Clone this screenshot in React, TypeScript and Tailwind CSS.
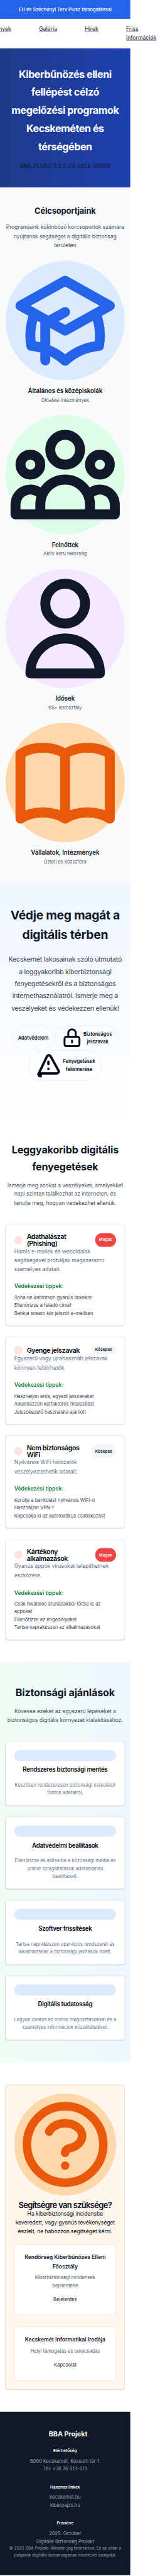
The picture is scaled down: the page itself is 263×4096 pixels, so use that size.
import type { ReactNode } from "react";

type IconProps = { d: string; className: string };

const Icon = ({ d, className }: IconProps) => (
  <svg viewBox="0 0 24 24" fill="none" stroke="currentColor" strokeWidth={2} strokeLinecap="round" strokeLinejoin="round" className={className}>
    <path d={d} />
  </svg>
);

const paths = {
  cap: "M12 14l9-5-9-5-9 5 9 5zm0 0l6.16-3.422a12.083 12.083 0 01.665 6.479A11.952 11.952 0 0012 20.055a11.952 11.952 0 00-6.824-2.998 12.078 12.078 0 01.665-6.479L12 14zm-4 6v-7.5l4-2.222",
  group: "M17 20h5v-2a3 3 0 00-5.356-1.857M17 20H7m10 0v-2c0-.656-.126-1.283-.356-1.857M7 20H2v-2a3 3 0 015.356-1.857M7 20v-2c0-.656.126-1.283.356-1.857m0 0a5.002 5.002 0 019.288 0M15 7a3 3 0 11-6 0 3 3 0 016 0zm6 3a2 2 0 11-4 0 2 2 0 014 0zM7 10a2 2 0 11-4 0 2 2 0 014 0z",
  user: "M16 7a4 4 0 11-8 0 4 4 0 018 0zM12 14a7 7 0 00-7 7h14a7 7 0 00-7-7z",
  book: "M12 6.253v13m0-13C10.832 5.477 9.246 5 7.5 5S4.168 5.477 3 6.253v13C4.168 18.477 5.754 18 7.5 18s3.332.477 4.5 1.253m0-13C13.168 5.477 14.754 5 16.5 5c1.747 0 3.332.477 4.5 1.253v13C19.832 18.477 18.247 18 16.5 18c-1.746 0-3.332.477-4.5 1.253",
  lock: "M12 15v2m-6 4h12a2 2 0 002-2v-6a2 2 0 00-2-2H6a2 2 0 00-2 2v6a2 2 0 002 2zm10-10V7a4 4 0 00-8 0v4h8z",
  warning: "M12 9v2m0 4h.01m-6.938 4h13.856c1.54 0 2.502-1.667 1.732-2.5L13.732 4c-.77-.833-1.964-.833-2.732 0L3.732 19c-.77.833.192 2.5 1.732 2.5z",
  question: "M8.228 9c.549-1.165 2.03-2 3.772-2 2.21 0 4 1.343 4 3 0 1.4-1.278 2.575-3.006 2.907-.542.104-.994.54-.994 1.093m0 3h.01M21 12a9 9 0 11-18 0 9 9 0 0118 0z",
};

const audiences = [
  { title: "Általános és középiskolák", text: "Oktatási intézmények", d: paths.cap, circle: "bg-[#dbeafe]", ink: "text-[#2563eb]" },
  { title: "Felnőttek", text: "Aktív korú lakosság", d: paths.group, circle: "bg-[#dcfce7]", ink: "text-[#111827]" },
  { title: "Idősek", text: "65+ korosztály", d: paths.user, circle: "bg-[#f3e8ff]", ink: "text-[#111827]" },
  { title: "Vállalatok, Intézmények", text: "Üzleti és közszféra", d: paths.book, circle: "bg-[#fed7aa]", ink: "text-[#ea580c]" },
];

const threats = [
  {
    title: "Adathalászat\n(Phishing)",
    high: true,
    text: "Hamis e-mailek és weboldalak\nsegítségével próbálják megszerezni\nszemélyes adatait.",
    tips: ["Soha ne kattintson gyanús linkekre", "Ellenőrizze a feladó címét", "Bankja sosem kér jelszót e-mailben"],
  },
  {
    title: "Gyenge jelszavak",
    high: false,
    text: "Egyszerű vagy újrahasznált jelszavak\nkönnyen feltörhetők.",
    tips: ["Használjon erős, egyedi jelszavakat", "Alkalmazzon kétfaktoros hitelesítést", "Jelszókezelő használata ajánlott"],
  },
  {
    title: "Nem biztonságos\nWiFi",
    high: false,
    text: "Nyilvános WiFi hálózatok\nveszélyeztethetik adatait.",
    tips: ["Kerülje a bankolást nyilvános WiFi-n", "Használjon VPN-t", "Kapcsolja ki az automatikus csatlakozást"],
  },
  {
    title: "Kártékony\nalkalmazások",
    high: true,
    text: "Gyanús appok vírusokat telepíthetnek\neszközére.",
    tips: ["Csak hivatalos áruházakból töltse le az\nappokat", "Ellenőrizze az engedélyeket", "Tartsa naprakészen az alkalmazásokat"],
  },
];

const advice = [
  { title: "Rendszeres biztonsági mentés", text: "Készítsen rendszeresen biztonsági másolatot\nfontos adatairól." },
  { title: "Adatvédelmi beállítások", text: "Ellenőrizze és állítsa be a közösségi média és\nonline szolgáltatások adatvédelmi\nbeállításait." },
  { title: "Szoftver frissítések", text: "Tartsa naprakészen operációs rendszerét és\nalkalmazásait a biztonsági javítások miatt." },
  { title: "Digitális tudatosság", text: "Legyen óvatos az online megosztásokkal és a\nszemélyes információk közzétételével." },
];

const contacts = [
  { title: "Rendőrség Kiberbűnözés Elleni\nFőosztály", text: "Kiberbiztonsági incidensek\nbejelentése", action: "Bejelentés" },
  { title: "Kecskemét Informatikai Irodája", text: "Helyi támogatás és tanácsadás", action: "Kapcsolat" },
];

const footerBlocks = [
  { title: "Elérhetőség", lines: ["6000 Kecskemét, Kossuth tér 1.", "Tel: +36 76 513-513"] },
  { title: "Hasznos linkek", lines: ["kecskemet.hu", "kiberpajzs.hu"] },
  { title: "Frissítve", lines: ["2025. October", "Digitális Biztonság Projekt"] },
];

const body = "text-[15.5px] leading-[25.6px] tracking-[-0.12px]";
const small = "text-[13.6px] leading-[22.4px]";
const centered = "flex flex-col items-center";

const Pill = ({ children }: { children: ReactNode }) => (
  <div className="flex items-center justify-center rounded-full border border-[#e2e8f0] px-4 py-0.5 text-center text-[13.6px] font-semibold leading-[22.4px] tracking-[0.07px] text-[#020817]">
    {children}
  </div>
);

const SectionHead = ({ title, text }: { title: string; text: string }) => (
  <div className={`mb-12 text-center ${centered}`}>
    <h2 className="mb-4 text-[29.1px] font-bold leading-[48px] tracking-[-0.32px] text-[#111827]">{title}</h2>
    <p className={`${body} text-[#4b5563]`}>{text}</p>
  </div>
);

export default function App() {
  return (
    <div className="h-[4096px] w-[263px] overflow-hidden bg-white">
      <div className="w-[475px] origin-top-left scale-[0.55385] whitespace-pre font-['Inter',sans-serif] text-[15.5px] leading-[25.6px] text-[#111827]">
        <div className="flex w-[375px] justify-center bg-[#2563eb] py-4 text-[13.6px] font-medium leading-[22.4px] tracking-[-0.09px] text-white">
          EU és Széchenyi Terv Plusz támogatással
        </div>

        <nav className="flex w-[475px] justify-end gap-20 overflow-hidden pt-4 pr-6 pb-[17px] font-medium tracking-[-0.04px] text-[#374151] underline">
          <a className="shrink-0">Események</a>
          <a className="shrink-0">Galéria</a>
          <a className="shrink-0">Hírek</a>
          <a className="w-[88px] shrink-0">{"Friss\ninformációk"}</a>
        </nav>

        <div className="w-[375px]">
          <section className={`bg-linear-to-r from-[#1e3a8a] to-[#1e40af] py-12 text-center ${centered}`}>
            <h1 className="mb-4 text-[29.1px] font-bold leading-[52.3px] tracking-[-0.79px] text-white">
              {"Kiberbűnözés elleni\nfellépést célzó\nmegelőzési programok\nKecskeméten és\ntérségében"}
            </h1>
            <p className="tracking-[0.04px]">BBA_PLUSZ-3.3.2-24-2024-00009</p>
          </section>

          <section className="bg-[#f9fafb] px-4 py-12 text-center">
            <h2 className="mb-4 text-[23.3px] font-bold leading-[38.4px] tracking-[-0.26px]">Célcsoportjaink</h2>
            <p className={`${body} text-[#4b5563]`}>{"Programjaink különböző korcsoportok számára\nnyújtanak segítséget a digitális biztonság\nterületén"}</p>
            <div className="mt-8 flex flex-col gap-8">
              {audiences.map((a) => (
                <div key={a.title}>
                  <div className={`mb-4 rounded-full ${a.circle} ${a.ink}`}>
                    <Icon d={a.d} className="block size-[343px]" />
                  </div>
                  <h3 className="text-[17.5px] font-semibold leading-[28.8px] tracking-[-0.15px]">{a.title}</h3>
                  <p className={`${small} text-[#4b5563]`}>{a.text}</p>
                </div>
              ))}
            </div>
          </section>

          <section className={`bg-linear-to-b from-[#eff6ff] to-white pt-16 pb-28 text-center ${centered}`}>
            <h2 className="mb-6 text-[34.9px] font-bold leading-[57.6px] tracking-[-0.54px]">{"Védje meg magát a\ndigitális térben"}</h2>
            <p className="mb-8 text-[19.4px] leading-[35px] tracking-[-0.5px] text-[#374151]">
              {"Kecskemét lakosainak szóló útmutató\na leggyakoribb kiberbiztonsági\nfenyegetésekről és a biztonságos\ninternethasználatról. Ismerje meg a\nveszélyeket és védekezzen ellenük!"}
            </p>
            <div className="flex w-[343px] flex-wrap justify-center gap-px">
              <Pill>Adatvédelem</Pill>
              <Pill>
                <Icon d={paths.lock} className="size-[64.5px] shrink-0" />
                <span className="w-[84px]">{"Biztonságos\njelszavak"}</span>
              </Pill>
              <Pill>
                <Icon d={paths.warning} className="size-[80.5px] shrink-0" />
                <span className="w-[96px]">{"Fenyegetések\nfelismerése"}</span>
              </Pill>
            </div>
          </section>

          <section className="px-4 py-16">
            <SectionHead
              title={"Leggyakoribb digitális\nfenyegetések"}
              text={"Ismerje meg azokat a veszélyeket, amelyekkel\nnapi szinten találkozhat az interneten, és\ntanulja meg, hogyan védekezhet ellenük."}
            />
            <div className="flex flex-col gap-8">
              {threats.map((t) => (
                <article key={t.title} className="rounded-lg border border-[#e2e8f0] bg-white p-6 shadow-sm">
                  <div className="flex justify-between">
                    <div className="flex items-center gap-3">
                      <div className="size-6 shrink-0 rounded-full bg-[#fee2e2]" />
                      <h3 className="text-[19.4px] font-semibold leading-[20px] tracking-[-0.8px] text-[#020817]">{t.title}</h3>
                    </div>
                    <div
                      className={`flex shrink-0 items-center rounded-full border border-transparent px-2.5 py-0.5 text-[11.65px] font-semibold leading-[19.2px] tracking-[0.1px] ${
                        t.high ? "bg-[#ef4444] text-[#f8fafc]" : "bg-[#f1f5f9] text-[#0f172a]"
                      }`}
                    >
                      {t.high ? "Magas" : "Közepes"}
                    </div>
                  </div>
                  <p className={`mb-6 ${body} text-[#64748b]`}>{t.text}</p>
                  <h4 className="mb-2 font-semibold text-[#15803d]">Védekezési tippek:</h4>
                  <ul className={`${small} text-[#374151]`}>
                    {t.tips.map((tip) => (
                      <li key={tip}>{tip}</li>
                    ))}
                  </ul>
                </article>
              ))}
            </div>
          </section>

          <section className="bg-linear-to-r from-[#f0fdf4] to-[#eff6ff] px-4 py-16">
            <SectionHead title="Biztonsági ajánlások" text={"Kövesse ezeket az egyszerű lépéseket a\nbiztonságos digitális környezet kialakításához."} />
            <div className="flex flex-col gap-8">
              {advice.map((a) => (
                <article key={a.title} className="rounded-lg border border-[#e2e8f0] bg-white p-6 text-center shadow-sm">
                  <div className="mb-4 h-8 rounded-full bg-[#dbeafe]" />
                  <h3 className="mb-6 text-[17.5px] font-semibold leading-[18px] tracking-[-0.53px] text-[#020817]">{a.title}</h3>
                  <p className={`${small} ${centered} text-[#64748b]`}>{a.text}</p>
                </article>
              ))}
            </div>
          </section>

          <section className="px-4 py-16">
            <div className="rounded-lg border border-[#fed7aa] bg-[#fff7ed] p-6 text-center text-[#020817] shadow-sm">
              <div className="mb-4 rounded-full bg-[#fed7aa] text-[#ea580c]">
                <Icon d={paths.question} className="block size-[293px]" />
              </div>
              <h2 className="text-[23.3px] font-semibold leading-[24px] tracking-[-1.12px]">Segítségre van szüksége?</h2>
              <p className={`mb-6 ${body}`}>{"Ha kiberbiztonsági incidensbe\nkeveredett, vagy gyanús tevékenységet\nészlelt, ne habozzon segítséget kérni."}</p>
              <div className="flex flex-col gap-8">
                {contacts.map((c) => (
                  <div key={c.title} className="rounded-xl border border-[#fed7aa] bg-white p-6">
                    <h4 className="mb-2 font-semibold text-[#111827]">{c.title}</h4>
                    <p className={`mb-3 ${small} text-[#4b5563]`}>{c.text}</p>
                    <div className="text-[13.6px] font-medium leading-[37.7px] text-[#374151]">{c.action}</div>
                  </div>
                ))}
              </div>
            </div>
          </section>

          <footer className="bg-[#111827] px-4 py-12 text-center text-[#9ca3af]">
            <div className="mb-[23px] pl-[17px] text-[19.4px] font-bold leading-[32px] tracking-[-0.05px] text-white">BBA Projekt</div>
            <div className="flex flex-col gap-8">
              {footerBlocks.map((b) => (
                <div key={b.title}>
                  <h4 className="mb-2 text-[11.65px] font-semibold leading-[19.2px] tracking-[0.05px] text-white">{b.title}</h4>
                  {b.lines.map((line) => (
                    <p key={line} className={small}>{line}</p>
                  ))}
                </div>
              ))}
            </div>
            <p className="text-[11.65px] leading-[19.2px] tracking-[0.13px]">{"© 2025 BBA Projekt. Minden jog fenntartva. Ez az oldal a\npolgárok digitális biztonságának növelését szolgálja."}</p>
          </footer>
        </div>
      </div>
    </div>
  );
}
